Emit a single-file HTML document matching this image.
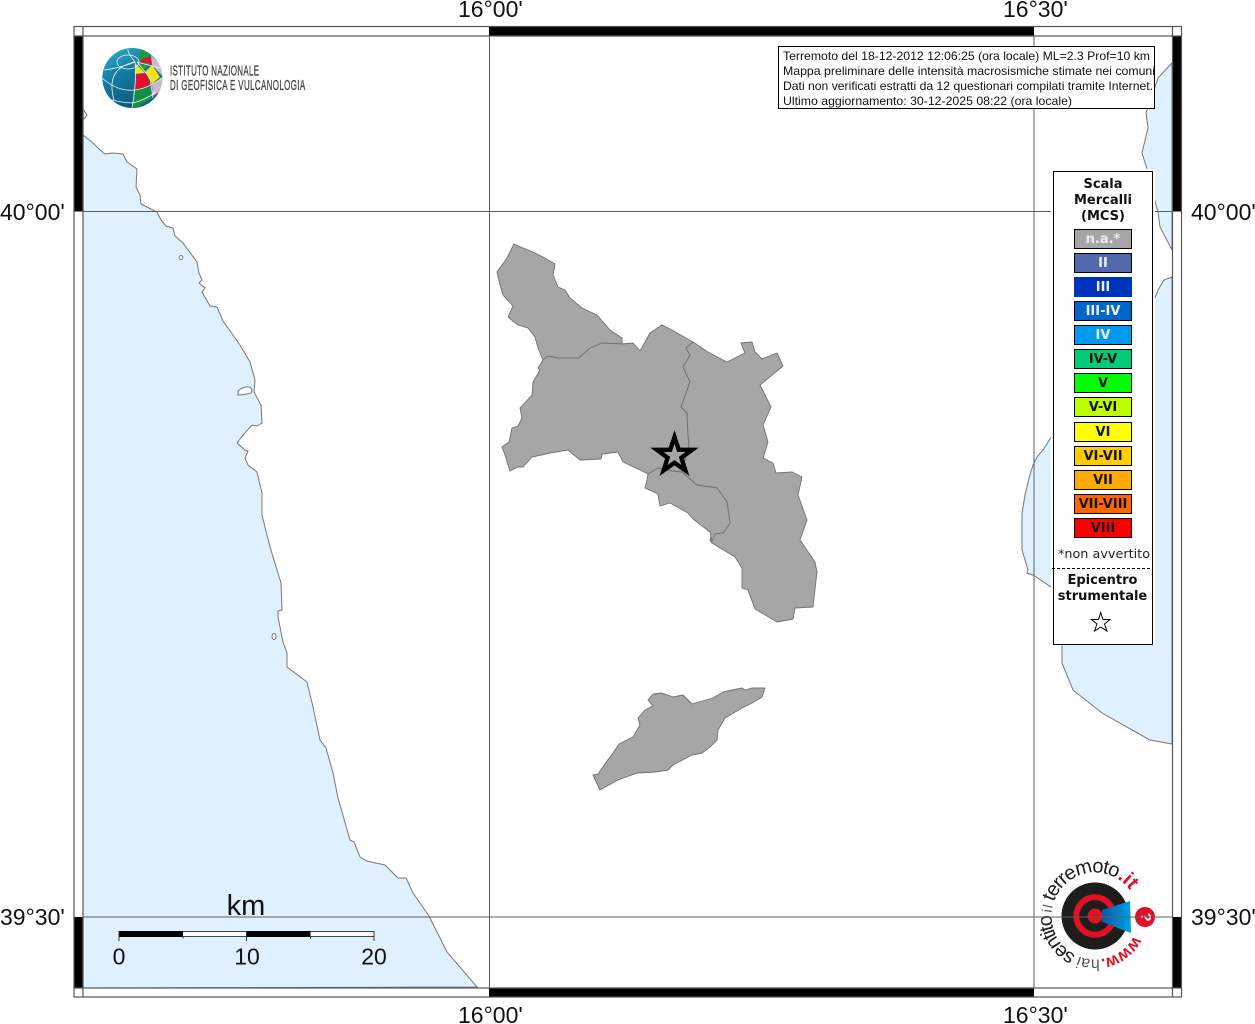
<!DOCTYPE html>
<html><head><meta charset="utf-8"><style>
html,body{margin:0;padding:0;background:#fff;width:1255px;height:1024px;overflow:hidden}
svg{display:block}
.ax{font:23px "Liberation Sans",sans-serif;fill:#111}
.lab{font:12px "Liberation Sans",sans-serif;fill:#111}
.lg{font:bold 13px "DejaVu Sans",sans-serif;text-anchor:middle;fill:#111}
.sw{font:bold 13px "DejaVu Sans",sans-serif;text-anchor:middle}
.com{fill:#a6a6a6;stroke:#707070;stroke-width:.9;stroke-linejoin:round}
.ht{font-family:"Liberation Sans",sans-serif}
</style></head><body>
<svg width="1255" height="1024" viewBox="0 0 1255 1024" xmlns="http://www.w3.org/2000/svg">
<defs>
<clipPath id="gc"><circle cx="132.3" cy="78" r="30"/></clipPath>
<clipPath id="lc"><rect x="778" y="46" width="376.5" height="63"/></clipPath>
<linearGradient id="gb" x1="0" y1="0" x2=".5" y2="1"><stop offset="0" stop-color="#35b4d2"/><stop offset=".5" stop-color="#13799f"/><stop offset="1" stop-color="#0b5579"/></linearGradient>
<linearGradient id="cone" x1="0" y1="0" x2="1" y2="0"><stop offset="0" stop-color="#0b58a8"/><stop offset="1" stop-color="#00a0e3"/></linearGradient>
<path id="arc" d="M1133.800 935.750A43.500 43.500 0 1 1 1133.800 896.250"/>
</defs>

<!-- water -->
<path fill="#dff1ff" stroke="#777" stroke-width="1" d="M83 135L93 143L100 150L105 154L113 153L123 154L127 162L137 169L136 187L140 195L141 204L157 212L161 220L166 226L173 228L175 236L183 243L197 262L199 273L202 280L199 283L205 288L202 292L210 306L217 307L223 321L240 345L250 362L255 380L254 392L261 405L262 423L257 426L252 425L243 435L237 443L245 450L248 451L245 458L248 465L257 472L262 493L262 515L270 547L281 583L282 610L278 611L278 617L283 642L287 653L287 667L295 673L307 682L313 707L320 740L326 748L333 773L338 798L350 840L354 842L360 857L367 861L385 865L398 878L406 878L413 893L429 916L447 952L477 987L83 988Z"/>
<path fill="#dff1ff" stroke="#777" stroke-width="1" d="M83 109L87 115L84 119L83 119Z"/>
<path fill="#fff" stroke="#777" d="M238 391Q243 386 250 387Q253 390 251 393Q244 395 238 395Z"/>
<ellipse cx="181" cy="257.500" rx="1.800" ry="2" fill="#fff" stroke="#777"/>
<ellipse cx="274" cy="636.500" rx="2" ry="3" fill="#fff" stroke="#777"/>
<path fill="#dff1ff" stroke="#777" d="M1172 63L1158 78L1146 113L1148 128L1142 153L1148 172L1152 190L1158 212L1160 227L1172 250Z"/>
<path fill="#dff1ff" stroke="#777" d="M1172 277L1164 280L1158 290L1155 298L1120 340L1050 439L1043 450L1037 457L1033 465L1029 478L1025 495L1022 513L1022 550L1028 570L1027 573L1033 575L1051 587L1062 610L1062 663L1073 690L1102 713L1150 740L1172 744Z"/>

<!-- communes -->
<path class="com" d="M514 244L523 248L533 252L543 257L555 264L553 275L558 287L565 290L570 298L582 308L597 315L610 330L622 338L622 344L602 343L590 348L579 358L558 358L548 356L543 360L538 348L535 337L528 328L518 325L508 317L513 306L503 295L500 285L497 272L507 258Z"/>
<path class="com" d="M543 360L548 356L558 358L579 358L590 348L602 343L622 344L633 343L640 351L650 333L662 325L672 330L693 342L686 348L690 355L683 367L690 382L681 407L687 413L688 435L689 445L682 472L672 471L658 468L648 474L638 469L623 462L618 452L602 454L601 459L580 460L568 450L550 453L532 457L523 467L518 467L510 471L505 455L502 447L509 442L512 428L518 426L522 418L520 408L532 395L533 382L540 370L538 368Z"/>
<path class="com" d="M693 342L708 352L723 360L727 362L745 353L741 343L752 342L755 352L762 359L777 353L783 366L760 385L771 407L763 425L768 442L763 458L773 463L776 473L792 472L802 477L798 495L807 520L800 540L815 562L817 572L813 607L795 608L793 619L777 622L755 609L748 590L742 588L742 568L735 557L712 543L710 540L712 533L723 533L730 523L727 502L717 488L697 485L682 472L689 445L688 435L687 413L681 407L690 382L683 367L690 355L686 348Z"/>
<path class="com" d="M682 472L697 485L717 488L727 502L730 523L723 533L715 534L712 542L710 532L693 519L688 513L670 503L660 506L658 494L645 488L647 480L648 474L658 468L672 471Z"/>
<path class="com" stroke-width=".6" d="M593 775L598 774L607 761L613 753L619 744L633 737L640 725L638 718L645 710L653 706L648 700L653 694L662 693L673 697L683 695L692 704L713 698L723 692L742 688L745 690L752 688L765 688L762 697L752 703L742 708L725 718L718 730L717 740L710 747L702 753L692 755L673 765L668 770L655 772L637 773L618 780L600 790Z"/>

<!-- earthquake star -->
<g transform="translate(674.5 455) scale(1.09) translate(-674.5 -455)">
<path fill="none" stroke="#000" stroke-width="4" stroke-miterlimit="10" d="M674.500 438.500L678.400 450.100L690.700 450.200L680.800 457.500L684.500 469.200L674.500 462.100L664.500 469.200L668.200 457.500L658.300 450.200L670.600 450.100Z"/>
</g>

<!-- INGV logo -->
<g clip-path="url(#gc)">
<rect x="100" y="46" width="65" height="64" fill="url(#gb)"/>
<path fill="#1f9a3c" d="M137 62L142 49L151 55Z"/>
<path fill="#e2122f" d="M137 62L151 56L152 65Z"/>
<path fill="#cbbccb" d="M151 55L162 66L163 77L152 65Z"/>
<path fill="#2d9c3d" d="M138 63L150 63L142 72Z"/>
<path fill="#f2e21d" d="M135 63L145 73L135 74Z"/>
<path fill="#f2e21d" d="M145 72L152 65L160 77L152 84Z"/>
<path fill="#e2122f" d="M135 75L146 73L151 85L135 90Z"/>
<path fill="#cbbccb" d="M152 85L163 77L162 90L153 96Z"/>
<path fill="#158f48" d="M133 91L152 86L153 98L133 110Z"/>
<path fill="#e2122f" d="M154 97L160 91L158 97Z"/>
<g fill="none" stroke="#e9f6f8" stroke-width=".8">
<path d="M135 62Q137 80 132 108"/><path d="M135 62Q105 68 114 100"/><path d="M135 62Q127 52 128 49"/>
<ellipse cx="128" cy="62" rx="11" ry="7"/>
<path d="M102 78Q118 92 135 90Q150 88 164 76"/><path d="M112 100Q125 103 133 103Q145 100 156 92"/>
<path d="M137 62L150 78L153 98"/><path d="M137 62L160 68"/>
<path d="M104 70Q120 68 135 62"/>
</g>
</g>
<text transform="translate(170 75.5) scale(.53 1)" font-family="Liberation Sans,sans-serif" font-size="15" fill="#444" stroke="#444" stroke-width=".35" textLength="168" lengthAdjust="spacing">ISTITUTO NAZIONALE</text>
<text transform="translate(170 90) scale(.53 1)" font-family="Liberation Sans,sans-serif" font-size="15" fill="#444" stroke="#444" stroke-width=".35" textLength="255" lengthAdjust="spacing">DI GEOFISICA E VULCANOLOGIA</text>

<!-- hai sentito logo -->
<circle cx="1095" cy="916" r="33.500" fill="#1d1d1b"/>
<circle cx="1095" cy="916" r="18.700" fill="none" stroke="#e30f26" stroke-width="6"/>
<circle cx="1095" cy="916" r="7.500" fill="#e30f26"/>
<path fill="url(#cone)" d="M1102 910L1130 901L1131 933L1102 922Z"/>
<circle cx="1145" cy="917" r="10" fill="#e30f26"/>
<text transform="translate(1140 917) rotate(90) translate(-4.500 -1)" class="ht" font-weight="bold" font-size="15" fill="#fff">?</text>
<text class="ht" font-size="17" font-weight="bold" fill="#e30f26" letter-spacing="-.5"><textPath href="#arc" startOffset="0">www.</textPath></text>
<text class="ht" font-size="16" fill="#555"><textPath href="#arc" startOffset="43">hai</textPath></text>
<text class="ht" font-size="20" fill="#1d1d1b" letter-spacing="-1.500"><textPath href="#arc" startOffset="67.500">sentito</textPath></text>
<text class="ht" font-size="14" fill="#555" letter-spacing="1"><textPath href="#arc" startOffset="119">il</textPath></text>
<text class="ht" font-size="20" fill="#1d1d1b" letter-spacing="-1.100"><textPath href="#arc" startOffset="130">terremoto</textPath></text>
<text class="ht" font-size="20" font-weight="bold" fill="#e30f26"><textPath href="#arc" startOffset="207">.it</textPath></text>

<!-- grid -->
<g stroke="#5f5f5f" stroke-width="1" fill="none">
<path d="M83 211.500H1172M83 917H1172M489.500 36V988M1034 36V988"/>
</g>

<!-- frame -->
<g fill="#000">
<rect x="489" y="26.500" width="545" height="9.500"/>
<rect x="489" y="988" width="545" height="9"/>
<rect x="73.500" y="36" width="9.500" height="175.500"/>
<rect x="73.500" y="917" width="9.500" height="71"/>
<rect x="1172.500" y="36" width="9.500" height="175.500"/>
<rect x="1172.500" y="917" width="9.500" height="71"/>
</g>
<g fill="none" stroke="#555" stroke-width="1.200">
<rect x="74" y="26.500" width="1107.500" height="970.500"/>
<rect x="83" y="36" width="1089.500" height="952"/>
<path d="M83 26.500V36M1172.500 26.500V36M83 988V997M1172.500 988V997M74 36H83M1172.500 36H1181.500M74 988H83M1172.500 988H1181.500"/>
</g>

<!-- axis labels -->
<text class="ax" x="458" y="17">16°00'</text>
<text class="ax" x="1003" y="17">16°30'</text>
<text class="ax" x="458" y="1023">16°00'</text>
<text class="ax" x="1003" y="1023">16°30'</text>
<text class="ax" x="0" y="220">40°00'</text>
<text class="ax" x="1191" y="220">40°00'</text>
<text class="ax" x="0" y="925">39°30'</text>
<text class="ax" x="1191" y="925">39°30'</text>

<!-- scale bar -->
<text x="246" y="915" font-family="Liberation Sans,sans-serif" font-size="29" text-anchor="middle" fill="#111">km</text>
<rect x="119" y="931.500" width="255" height="5" fill="#fff" stroke="#444" stroke-width="1"/>
<rect x="119" y="931" width="64" height="6" fill="#000"/>
<rect x="246.500" y="931" width="64" height="6" fill="#000"/>
<path d="M119 931V941M246.500 931V941M374 931V941M183 936V938.500M310.500 936V938.500" stroke="#333" stroke-width="1"/>
<g font-family="Liberation Sans,sans-serif" font-size="23" text-anchor="middle" fill="#111">
<text x="119" y="964.500">0</text><text x="247" y="964.500">10</text><text x="374" y="964.500">20</text>
</g>

<!-- title box -->
<rect x="778.500" y="46.500" width="376" height="62" fill="#fff" stroke="#000" stroke-width="1"/>
<g clip-path="url(#lc)">
<text class="lab" x="783" y="60" textLength="367" lengthAdjust="spacingAndGlyphs">Terremoto del 18-12-2012 12:06:25 (ora locale) ML=2.3 Prof=10 km</text>
<text class="lab" x="783" y="75" textLength="372" lengthAdjust="spacingAndGlyphs">Mappa preliminare delle intensità macrosismiche stimate nei comuni</text>
<text class="lab" x="783" y="90" textLength="370" lengthAdjust="spacingAndGlyphs">Dati non verificati estratti da 12 questionari compilati tramite Internet.</text>
<text class="lab" x="783" y="105" textLength="289" lengthAdjust="spacingAndGlyphs">Ultimo aggiornamento: 30-12-2025 08:22 (ora locale)</text>
</g>

<!-- legend -->
<rect x="1051" y="169" width="104" height="476" fill="#fff"/>
<rect x="1053.500" y="171.500" width="99" height="473" fill="#fff" stroke="#000" stroke-width="1"/>
<text class="lg" x="1103" y="188">Scala</text>
<text class="lg" x="1103" y="204">Mercalli</text>
<text class="lg" x="1103" y="220">(MCS)</text>
<g stroke="#000" stroke-width="1">
<rect x="1074.500" y="229.500" width="57" height="19" fill="#a6a6a6"/>
<rect x="1074.500" y="253.500" width="57" height="19" fill="#5168ad"/>
<rect x="1074" y="277" width="58" height="20" fill="#0033bb" stroke="none"/>
<rect x="1074.500" y="301.500" width="57" height="19" fill="#0066cc"/>
<rect x="1074.500" y="325.500" width="57" height="19" fill="#0099ee"/>
<rect x="1074.500" y="349.500" width="57" height="19" fill="#00cc77"/>
<rect x="1074.500" y="373.500" width="57" height="19" fill="#00ff00"/>
<rect x="1074.500" y="397.500" width="57" height="19" fill="#bbff00"/>
<rect x="1074.500" y="422.500" width="57" height="19" fill="#ffff00"/>
<rect x="1074.500" y="446.500" width="57" height="19" fill="#ffcc00"/>
<rect x="1074.500" y="470.500" width="57" height="19" fill="#ffaa00"/>
<rect x="1074.500" y="494.500" width="57" height="19" fill="#ff6600"/>
<rect x="1074.500" y="518.500" width="57" height="19" fill="#ff0000"/>
</g>
<g>
<text class="sw" x="1103" y="243" fill="#eee">n.a.*</text>
<text class="sw" x="1103" y="267" fill="#eee">II</text>
<text class="sw" x="1103" y="291" fill="#eee">III</text>
<text class="sw" x="1103" y="315" fill="#eee">III-IV</text>
<text class="sw" x="1103" y="339" fill="#eee">IV</text>
<text class="sw" x="1103" y="363" fill="#111">IV-V</text>
<text class="sw" x="1103" y="387" fill="#111">V</text>
<text class="sw" x="1103" y="411" fill="#111">V-VI</text>
<text class="sw" x="1103" y="436" fill="#111">VI</text>
<text class="sw" x="1103" y="460" fill="#111">VI-VII</text>
<text class="sw" x="1103" y="484" fill="#111">VII</text>
<text class="sw" x="1103" y="508" fill="#111">VII-VIII</text>
<text class="sw" x="1103" y="532" fill="#111">VIII</text>
</g>
<text x="1104" y="558" font-family="DejaVu Sans,sans-serif" font-size="12.800" text-anchor="middle" fill="#222">*non avvertito</text>
<path d="M1052 568.500H1150" stroke="#000" stroke-width="1" stroke-dasharray="3 2"/>
<text class="lg" x="1102.500" y="584">Epicentro</text>
<text class="lg" x="1102.500" y="600">strumentale</text>
<path fill="#fff" stroke="#000" stroke-width="1" d="M1100.700 612.500L1103 619.500L1110 619.500L1104.500 624L1107 631L1100.700 627L1094.500 631L1097 624L1091.500 619.500L1098.500 619.500Z"/>
</svg>
</body></html>
